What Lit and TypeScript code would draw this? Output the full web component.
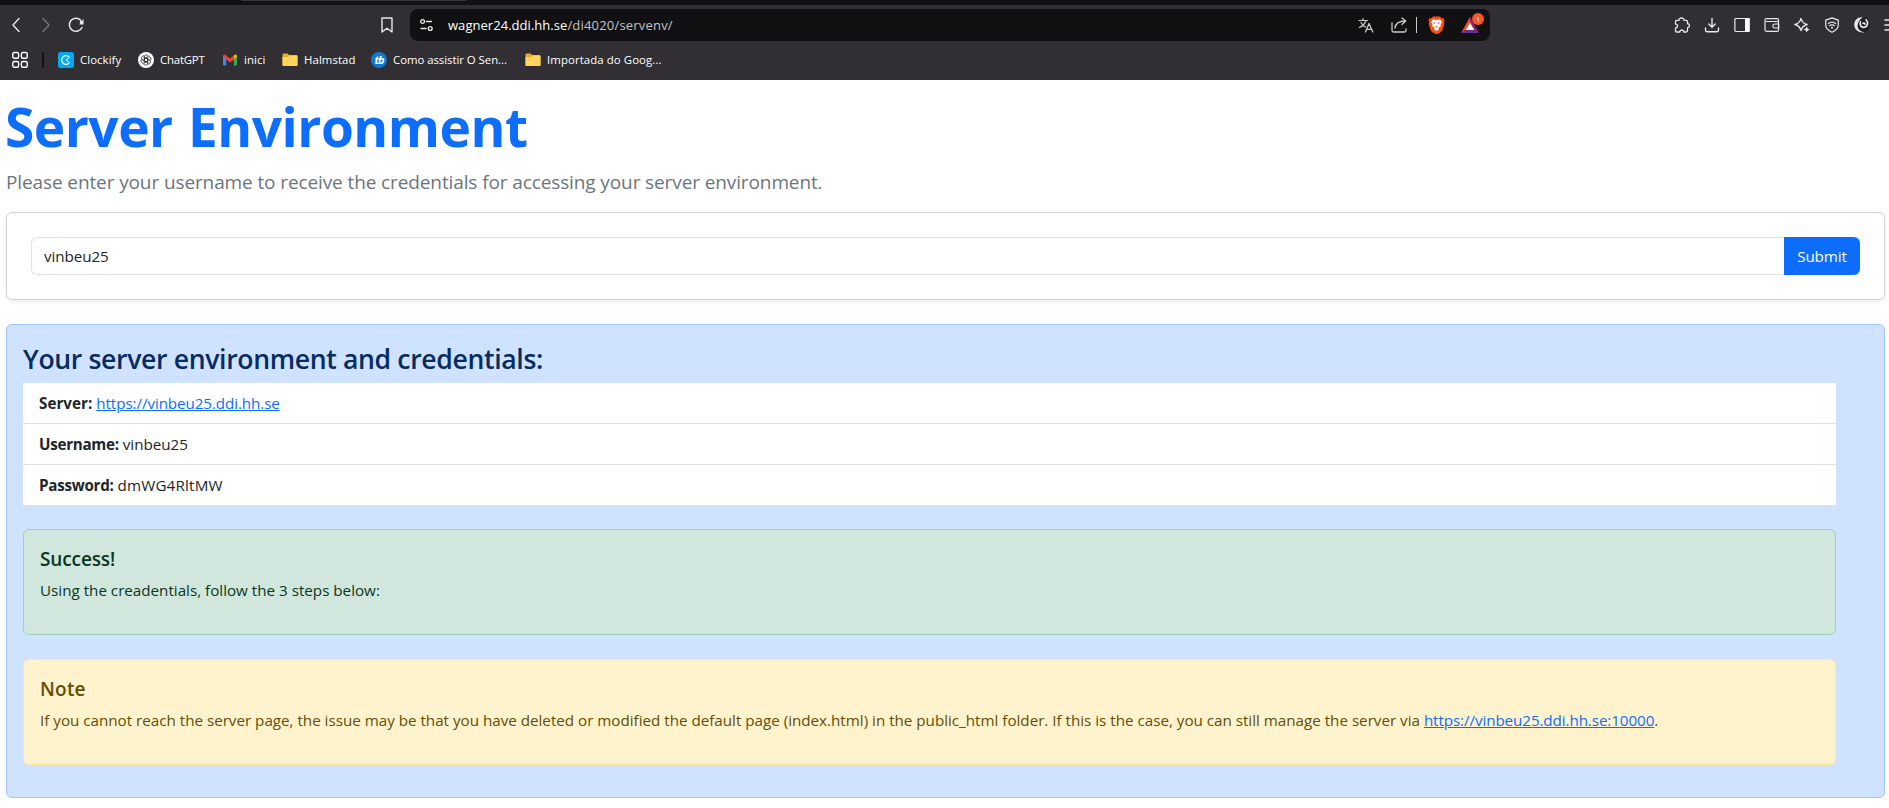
import { LitElement, html, css, svg } from "lit";
import { customElement } from "lit/decorators.js";

const icon = (w: number, h: number, body: unknown) =>
  html`<svg width=${w} height=${h} viewBox="0 0 ${w} ${h}" fill="none" stroke="currentColor" stroke-width="1.4" stroke-linecap="round" stroke-linejoin="round">${body}</svg>`;

const folder = icon(16, 16, svg`
  <path d="M.5 2.5q0-1 1-1h4l1.6 1.6h7.400q1 0 1 1V13q0 1-1 1h-13q-1 0-1-1z" fill="#e9a92a" stroke="none"/>
  <path d="M.5 5h5.500l1.500-1.500h7q1 0 1 1V13q0 1-1 1h-13q-1 0-1-1z" fill="#ffd55e" stroke="none"/>`);

const bookmarks = [
  { cls: "clockify", label: "Clockify", pic: icon(16, 16, svg`
      <rect width="16" height="16" rx="2.500" fill="#03a9f4" stroke="none"/>
      <path d="M10.300 4.300A4.300 4.300 0 1 0 10.300 11.700" stroke="#fff" stroke-width="1.200"/>
      <path d="M9.200 7.200l2.500-2.300M9.200 8.800l2.500 2.300" stroke="#fff" stroke-width="1"/><circle cx="8.300" cy="8" r=".8" fill="#fff" stroke="none"/>`) },
  { cls: "gpt", label: "ChatGPT", pic: icon(16, 16, svg`
      <circle cx="8" cy="8" r="8" fill="#fff" stroke="none"/>
      <g stroke="#333" stroke-width=".8">
        ${[0, 60, 120, 180, 240, 300].map((a) => svg`<path transform="rotate(${a} 8 8)" d="M6.300 9V5.200A2.300 2.300 0 0 1 10.600 4M6.300 7L9.500 5.200"/>`)}
      </g>`) },
  { cls: "mail", label: "inici", pic: icon(16, 16, svg`
      <g stroke="none">
        <path d="M1 4v8.500q0 1 1 1h2.200V6z" fill="#4285f4"/>
        <path d="M15 4v8.500q0 1-1 1h-2.200V6z" fill="#34a853"/>
        <path d="M11.800 3.500Q15 1 15 4.500L11.800 7.600z" fill="#fbbc04"/>
        <path d="M4.200 7.600L1 5V4Q1.200 1.600 3.500 3L8 6.500 12 3.300v4.100L8 10.500z" fill="#ea4335"/>
      </g>`) },
  { cls: "halmstad", label: "Halmstad", pic: folder },
  { cls: "como", label: "Como assistir O Sen...", pic: html`<span class="tb">tb</span>` },
  { cls: "import", label: "Importada do Goog...", pic: folder },
];

@customElement("browser-bar")
class BrowserBar extends LitElement {
  static styles = css`
    :host { display: block; height: 80px; background: #312f34; color: #e8e8ea; font-family: "Open Sans", sans-serif; overflow: hidden; }
    svg { display: block; flex: none; }
    .tabs { height: 5px; background: #111113; display: flex; padding-left: 241px; }
    .tab { width: 225px; height: 1px; background: #38363b; }
    .nav { height: 40px; display: flex; align-items: center; padding-left: 8px; }
    .back { margin-right: 14px; }
    .forward { color: #77757a; margin-right: 14px; }
    .mark { margin-left: 295px; }
    .url { flex: none; margin-left: 15px; width: 1080px; height: 32px; box-sizing: border-box; border-radius: 8px; background: #111113; display: flex; align-items: center; padding: 0 11px 0 10px; }
    .address { margin-left: 15px; font-size: 13px; line-height: 20px; color: #c3c3c6; letter-spacing: .19px; white-space: nowrap; }
    .domain { color: #fff; letter-spacing: .04px; }
    .actions { margin-left: auto; display: flex; align-items: center; color: #c9c9cc; }
    .share { margin-left: 17px; }
    .rule { width: 1px; height: 16px; background: #c9c9cc; margin: 0 11px 0 8px; }
    .rewards { position: relative; margin-left: 16px; }
    .badge { position: absolute; left: 11px; top: -4px; width: 12px; height: 12px; border-radius: 50%; background: #fb542b; color: #fff; font-size: 8px; line-height: 12px; text-align: center; }
    .tools { margin-left: 184px; display: flex; gap: 14px; flex: none; }
    .marks { height: 30px; display: flex; align-items: center; padding-left: 12px; font-size: 11.400px; line-height: 18px; color: #fff; }
    .sep { width: 2px; height: 16px; background: #141416; margin: 0 14px; flex: none; }
    .item { display: flex; align-items: center; gap: 6px; white-space: nowrap; flex: none; }
    .clockify { width: 80px; letter-spacing: .06px; }
    .gpt { width: 84px; letter-spacing: -.2px; }
    .mail { width: 60px; letter-spacing: .08px; }
    .halmstad { width: 89px; letter-spacing: .08px; }
    .como { width: 154px; letter-spacing: -.04px; }
    .import { letter-spacing: .09px; }
    .tb { width: 16px; height: 16px; border-radius: 50%; background: #1279d0; font: italic 700 11px/15px "Open Sans", sans-serif; letter-spacing: -1px; text-align: center; }
  `;

  render() {
    return html`
      <div class="tabs"><div class="tab"></div></div>
      <div class="nav">
        <span class="back">${icon(16, 16, svg`<path d="M11 1.500L5 8l6 6.500"/>`)}</span>
        <span class="forward">${icon(16, 16, svg`<path d="M5 1.500L11 8l-6 6.500"/>`)}</span>
        ${icon(16, 16, svg`<path d="M12.800 3.200A6.600 6.600 0 1 0 14 10.500" stroke-width="1.500"/><path d="M15.500 2v5.500h-4.200z" fill="currentColor" stroke="none"/><circle cx="13.500" cy="5.500" r="1.800" fill="currentColor" stroke="none"/>`)}
        <span class="mark">${icon(16, 16, svg`<path d="M3 1h10v14l-5-3.700L3 15z"/>`)}</span>
        <div class="url">
          ${icon(13, 14, svg`<circle cx="2.600" cy="3.500" r="1.900"/><path d="M6.500 3.500h5M1 10.500h5"/><circle cx="10.200" cy="10.500" r="1.900"/>`)}
          <span class="address"><span class="domain">wagner24.ddi.hh.se</span>/di4020/servenv/</span>
          <div class="actions">
            ${icon(16, 16, svg`<path d="M1 3.500h8.500M5 1.500v2M8 3.500C7 6.500 4.500 9 1.500 10.500M3 5.500C4 7.500 5.500 9 7.500 10" stroke-width="1.200"/><path d="M7.500 15l3.500-8.500L14.800 15M8.700 12.300h4.800" stroke-width="1.300"/>`)}
            <span class="share">${icon(17, 16, svg`<path d="M1 6v7.500q0 1.500 1.500 1.500h11q1.500 0 1.500-1.500V12M4 11C4.500 6.500 8 4 14.500 4M11 1l3.700 3L11 7.500" stroke-width="1.300"/>`)}</span>
            <div class="rule"></div>
            ${icon(17, 18, svg`<g stroke="none">
              <path d="M5 .5h7l1.500 1.700 1.800-.2 1.200 2.500-.6 1.500.5 1.500-2.100 7-1.800 1.800-4 2.200-4-2.200-1.800-1.800-2.100-7 .5-1.500L.5 4.500 1.700 2l1.800.2z" fill="#fb4f0b"/>
              <path d="M5 3.300l3.500.7 3.500-.7 2 2.700-1.500 2.500.3 1.700-2.300 1.500.3 1.600-2.300 1.700-2.300-1.700.3-1.600-2.300-1.500.3-1.700L3 6z" fill="#fff"/>
              <path d="M4.600 6.300l2.600.5-.4 1.500zM12.400 6.300l-2.600.5.4 1.500zM7.300 10l1.200.6 1.200-.6-.6 1.500H7.900z" fill="#fb4f0b"/></g>`)}
            <div class="rewards">
              ${icon(18, 16, svg`<g stroke="none"><path d="M9 0L0 16l5-3 4-7z" fill="#ff4724"/><path d="M9 0l9 16-5-3-4-7z" fill="#9e1f63"/><path d="M0 16h18l-5-3.200H5z" fill="#662d91"/><path d="M9 5.500l4.300 7.500H4.700z" fill="#fff"/></g>`)}
              <span class="badge">1</span>
            </div>
          </div>
        </div>
        <div class="tools">
          ${icon(16, 16, svg`<path d="M1.500 4.500q0-1.200 1.200-1.200H5C4.800.2 10.200.2 10 3.300h2.300q1.200 0 1.200 1.200v2.200c2.600-.2 2.600 4.200 0 4v2.800q0 1.500-1.500 1.500H9.800c.1-2.700-4-2.700-3.900 0H2.700q-1.200 0-1.200-1.200V11c2.700 0 2.700-4 0-3.900z" stroke-width="1.300"/>`)}
          ${icon(16, 16, svg`<path d="M8 1.500v8.500M4.800 7L8 10.200 11.200 7M1.500 11v2q0 1.700 1.700 1.700h9.600q1.700 0 1.700-1.700v-2"/>`)}
          ${icon(16, 16, svg`<rect x=".9" y="1.500" width="14.200" height="13" rx=".8" stroke-width="1.200"/><path d="M11 1h4.500v14H11z" fill="#fff" stroke="none"/>`)}
          ${icon(16, 16, svg`<path d="M14.500 4.500V3q0-1.300-1.300-1.300H2.500Q1 1.700 1 3.100v9.700q0 1.500 1.500 1.500h10.700q1.300 0 1.300-1.300V4.500H2.500M14.800 7h-4q-2 .3-2 2t2 2h4z" stroke-width="1.200"/>`)}
          ${icon(16, 16, svg`<path d="M7 1.300q1.200 5 6.200 6.200-5 1.300-6.200 6.200Q5.800 8.800 .8 7.500 5.800 6.300 7 1.300z" stroke-width="1.300"/><path d="M12.700 9.500q.6 2.400 3 3-2.400.6-3 3-.6-2.400-3-3 2.400-.6 3-3z" fill="currentColor" stroke="none"/>`)}
          ${icon(16, 16, svg`<path d="M8 .9l6.300 2.200v5q0 4.600-6.300 7.200Q1.700 12.700 1.700 8.100v-5z" stroke-width="1.200"/><path d="M4.300 6.500q3.700-2.800 7.400 0M5.700 8.600q2.300-1.600 4.600 0" stroke-width="1.200"/><circle cx="8" cy="10.700" r="1" fill="currentColor" stroke="none"/>`)}
          ${icon(16, 16, svg`<circle cx="8" cy="8" r="7.800" fill="#1d1d24" stroke="none"/><path d="M9 .3C3.500-.5-.2 3.800.2 8.300c.4 4.900 5.500 8.300 10.600 6.900-4.600-.3-7.400-3.200-7.100-6.900C4 4.800 6 2.200 9 .3z" fill="#e4e4ea" stroke="none"/><path d="M6.500 4.800C5.200 8 7.400 11 10.500 10.300c3.600-1 4-5 1.500-7.500M9 6.500c1-.8 2-.2 2 .8" stroke="#f2f2f5" stroke-width="1.600"/>`)}
          ${icon(16, 16, svg`<path d="M1 3h14M1 8h14M1 13h14" stroke-width="1.500"/>`)}
        </div>
      </div>
      <div class="marks">
        ${icon(16, 18, svg`<rect x=".8" y="1.500" width="5.800" height="5.800" rx="1.500"/><rect x="9.400" y="1.500" width="5.800" height="5.800" rx="1.500"/><rect x=".8" y="10.500" width="5.800" height="5.800" rx="1.500"/><rect x="9.400" y="10.500" width="5.800" height="5.800" rx="1.500"/>`)}
        <div class="sep"></div>
        ${bookmarks.map((b) => html`<div class="item ${b.cls}">${b.pic}<span>${b.label}</span></div>`)}
      </div>`;
  }
}

@customElement("app-root")
class AppRoot extends LitElement {
  static styles = css`
    :host { display: block; height: 808px; overflow: hidden; background: #fff; color: #212529; font: 15.200px/24px "Open Sans", sans-serif; }
    * { box-sizing: border-box; }
    h1, h2, h3, p, ul { margin: 0; }
    a { color: #0d6efd; text-decoration: underline; letter-spacing: -.09px; }
    .page { padding: 13px 4px 0 6px; }
    h1 { font-size: 53.200px; line-height: 67px; font-weight: 700; color: #0d6efd; letter-spacing: -.5px; word-spacing: 2px; margin-left: -1px; }
    .lead { font-size: 19px; line-height: 30px; color: #6c757d; letter-spacing: -.11px; margin: 7px 0 15px; }
    .card { border: 1px solid #d3d3d4; border-radius: 6px; box-shadow: 0 2px 4px rgba(0, 0, 0, .075); padding: 24px; display: flex; height: 88px; }
    .field { flex: 1; min-width: 0; height: 38px; border: 1px solid #dee2e6; border-right: 0; border-radius: 6px 0 0 6px; padding: 6px 12px; color: #212529; background: #fff; font: inherit; letter-spacing: -.08px; outline: 0; }
    .submit { width: 76px; height: 38px; border: 0; border-radius: 0 6px 6px 0; background: #0d6efd; color: #fff; font: inherit; padding: 0; letter-spacing: -.1px; }
    .panel { margin-top: 24px; border: 1px solid #9ec5fe; border-radius: 6px; background: #cfe2ff; padding: 18px 48px 32px 16px; }
    h2 { font-size: 26.600px; line-height: 33px; font-weight: 600; color: #052c65; letter-spacing: -.35px; margin-bottom: 7px; }
    .list { list-style: none; padding: 0; background: #fff; }
    .row { padding: 8px 16px; height: 41px; border-bottom: 1px solid #dee2e6; }
    .row:last-child { border-bottom: 0; height: 40px; }
    b { font-weight: 700; letter-spacing: -.28px; }
    .server { letter-spacing: .04px; }
    .password { letter-spacing: .18px; }
    .alert { margin-top: 24px; border: 1px solid; border-radius: 6px; padding: 17px 16px 16px; height: 106px; }
    h3 { font-size: 19px; line-height: 24px; font-weight: 600; letter-spacing: -.12px; margin-bottom: 7px; }
    .success { background: #d1e7dd; border-color: #a3cfbb; color: #0a3622; }
    .note { background: #fff3cd; border-color: #ffe69c; color: #664d03; }
    .note h3 { letter-spacing: .2px; }
    .note p { letter-spacing: -.006px; }
  `;

  render() {
    return html`
      <browser-bar></browser-bar>
      <main class="page">
        <h1>Server Environment</h1>
        <p class="lead">Please enter your username to receive the credentials for accessing your server environment.</p>
        <div class="card">
          <input class="field" type="text" .value=${"vinbeu25"} />
          <button class="submit">Submit</button>
        </div>
        <section class="panel">
          <h2>Your server environment and credentials:</h2>
          <ul class="list">
            <li class="row"><b class="server">Server:</b> <a>https://vinbeu25.ddi.hh.se</a></li>
            <li class="row"><b>Username:</b> vinbeu25</li>
            <li class="row"><b>Password:</b> <span class="password">dmWG4RltMW</span></li>
          </ul>
          <div class="alert success">
            <h3>Success!</h3>
            <p>Using the creadentials, follow the 3 steps below:</p>
          </div>
          <div class="alert note">
            <h3>Note</h3>
            <p>If you cannot reach the server page, the issue may be that you have deleted or modified the default page (index.html) in the public_html folder. If this is the case, you can still manage the server via <a>https://vinbeu25.ddi.hh.se:10000</a>.</p>
          </div>
        </section>
      </main>`;
  }
}
